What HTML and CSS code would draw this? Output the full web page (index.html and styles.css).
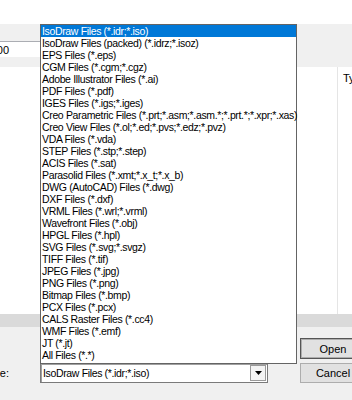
FILE: index.html
```html
<!DOCTYPE html>
<html lang="en">
<head>
    <meta charset="UTF-8">
    <meta name="viewport" content="width=device-width, initial-scale=1.0">
    <title>Open File</title>
    <link rel="stylesheet" href="styles.css">
</head>
<body>
    <div class="dialog">
        <div class="top-strip"></div>

        <div class="toolbar">
            <div class="path-field"><span>100</span></div>
        </div>

        <div class="browser">
            <div class="files"></div>
            <div class="col-head"><span>Type</span></div>
        </div>

        <div class="hscroll"></div>

        <div class="footer">
            <div class="label"><span>Files of type:</span></div>
            <div class="combo">
                <span class="combo-text">IsoDraw Files (*.idr;*.iso)</span>
                <span class="combo-btn">
                    <svg width="7" height="4" viewBox="0 0 7 4"><path d="M0 0h7L3.5 4z" fill="#000"/></svg>
                </span>
            </div>
            <button class="btn btn-default btn-open">Open</button>
            <button class="btn btn-cancel">Cancel</button>
        </div>

        <!-- aufgeklappte Typ-Liste -->
        <ul class="dropdown">
            <li class="selected">IsoDraw Files (*.idr;*.iso)</li>
            <li>IsoDraw Files (packed) (*.idrz;*.isoz)</li>
            <li>EPS Files (*.eps)</li>
            <li>CGM Files (*.cgm;*.cgz)</li>
            <li>Adobe Illustrator Files (*.ai)</li>
            <li>PDF Files (*.pdf)</li>
            <li>IGES Files (*.igs;*.iges)</li>
            <li>Creo Parametric Files (*.prt;*.asm;*.asm.*;*.prt.*;*.xpr;*.xas)</li>
            <li>Creo View Files (*.ol;*.ed;*.pvs;*.edz;*.pvz)</li>
            <li>VDA Files (*.vda)</li>
            <li>STEP Files (*.stp;*.step)</li>
            <li>ACIS Files (*.sat)</li>
            <li>Parasolid Files (*.xmt;*.x_t;*.x_b)</li>
            <li>DWG (AutoCAD) Files (*.dwg)</li>
            <li>DXF Files (*.dxf)</li>
            <li>VRML Files (*.wrl;*.vrml)</li>
            <li>Wavefront Files (*.obj)</li>
            <li>HPGL Files (*.hpl)</li>
            <li>SVG Files (*.svg;*.svgz)</li>
            <li>TIFF Files (*.tif)</li>
            <li>JPEG Files (*.jpg)</li>
            <li>PNG Files (*.png)</li>
            <li>Bitmap Files (*.bmp)</li>
            <li>PCX Files (*.pcx)</li>
            <li>CALS Raster Files (*.cc4)</li>
            <li>WMF Files (*.emf)</li>
            <li>JT (*.jt)</li>
            <li>All Files (*.*)</li>
        </ul>
    </div>
</body>
</html>
```

FILE: styles.css
```css
/* Open-Dialog mit aufgeklappter Dateityp-Liste */
body {
    margin: 0;
    font-family: "Liberation Sans", Arial, sans-serif;
    font-size: 11px;
    color: #000;
    background-color: #fff;
    overflow: hidden;
}

.dialog {
    position: relative;
    width: 352px;
    height: 400px;
    overflow: hidden;
    display: flex;
    flex-direction: column;
}

.top-strip {
    height: 24px;
    background-color: #fff;
}

.toolbar {
    height: 43px;
    background-color: #f0f0f0;
    padding-top: 17px;
    box-sizing: border-box;
}

.path-field {
    width: 40px;
    height: 16px;
    box-sizing: border-box;
    background-color: #fff;
    border-top: 1px solid #abadb3;
    display: flex;
    justify-content: flex-end;
    align-items: center;
    padding-right: 31px;
    overflow: hidden;
    white-space: nowrap;
}

.browser {
    height: 247px;
    background-color: #fff;
    display: flex;
}

.files {
    flex: 0 0 337px;
}

.col-head {
    flex: 1;
    border-left: 1px solid #e5e5e5;
    padding: 5px 0 0 5px;
    white-space: nowrap;
    overflow: hidden;
}

.hscroll {
    height: 13px;
    background-color: #dadada;
}

.footer {
    flex: 1;
    background-color: #f0f0f0;
    display: grid;
    grid-template-columns: 40px 228px 32px 66px;
    grid-template-rows: 21px 20px;
    row-gap: 4px;
    padding-top: 11px;
}

.label {
    grid-column: 1;
    grid-row: 2;
    display: flex;
    justify-content: flex-end;
    align-items: center;
    padding-right: 31px;
    overflow: hidden;
    white-space: nowrap;
}

.combo {
    grid-column: 2;
    grid-row: 2;
    display: flex;
    align-items: center;
    background-color: #fff;
    border: 1px solid #7a7a7a;
    box-shadow: inset 1px 1px 0 #a0a0a0;
}

.combo-text {
    flex: 1;
    padding-left: 2px;
    white-space: nowrap;
    font-size: 10.5px;
    letter-spacing: -0.35px;
}

.combo-btn {
    width: 16px;
    align-self: stretch;
    margin: 1px;
    box-sizing: border-box;
    border: 1px solid #9a9a9a;
    background-color: #f4f4f4;
    display: flex;
    justify-content: center;
    align-items: center;
}

.btn {
    grid-column: 4;
    font-family: "Liberation Sans", Arial, sans-serif;
    font-size: 11px;
    color: #000;
    background-color: #e1e1e1;
    border: 1px solid #adadad;
    padding: 0;
}

.btn-open {
    grid-row: 1;
}

.btn-default {
    border: 1px solid #555;
    box-shadow: inset 0 0 0 1px #adadad;
}

.btn-cancel {
    grid-row: 2;
}

.dropdown {
    position: absolute;
    left: 40px;
    top: 24px;
    width: 257px;
    margin: 0;
    padding: 0 0 2px 0;
    list-style: none;
    background-color: #fff;
    border: 1px solid #646464;
    box-sizing: border-box;
}

.dropdown li {
    height: 12px;
    line-height: 12px;
    padding-left: 1px;
    white-space: nowrap;
    font-size: 10.5px;
    letter-spacing: -0.35px;
}

.dropdown li.selected {
    background-color: #0078d7;
    color: #fff;
}
```
